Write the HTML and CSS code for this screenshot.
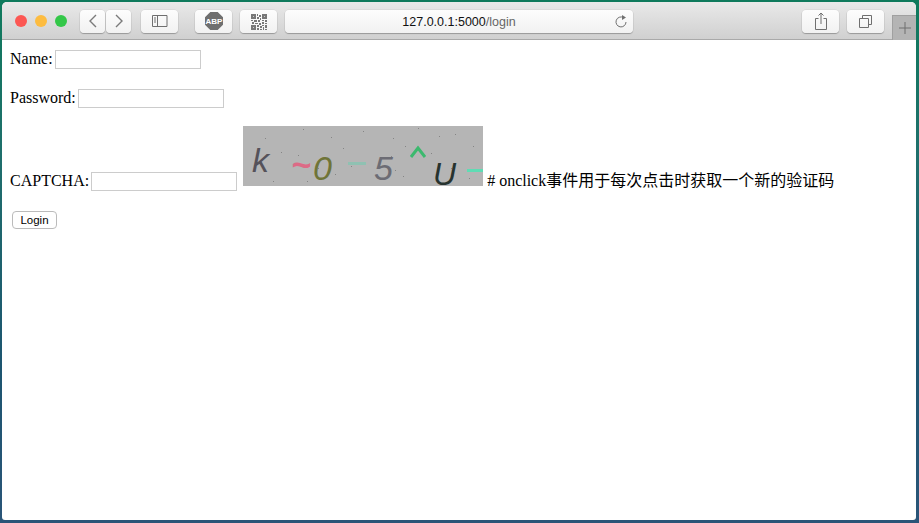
FILE: index.html
```html
<!DOCTYPE html>
<html lang="en">
<head>
  <meta charset="UTF-8" />
  <meta name="viewport" content="width=device-width, initial-scale=1" />
  <title>Login</title>
  <link rel="stylesheet" href="styles.css">
</head>
<body>
  <div class="window">
    <div class="toolbar">
      <div class="lights">
        <span class="light red"></span>
        <span class="light yellow"></span>
        <span class="light green"></span>
      </div>
      <div class="nav">
        <div class="tool tool-nav">
          <svg width="10" height="14" viewBox="0 0 10 14"><path d="M8 1 L2 7 L8 13" class="line"/></svg>
        </div>
        <div class="tool tool-nav">
          <svg width="10" height="14" viewBox="0 0 10 14"><path d="M2 1 L8 7 L2 13" class="line"/></svg>
        </div>
      </div>
      <div class="tool tool-side">
        <svg width="16" height="12" viewBox="0 0 16 12"><path d="M.5.5h14.5v11H.5zM5.5.5v11M2 3h2M2 5h2M2 7h2" class="thin"/></svg>
      </div>
      <div class="tool tool-abp">
        <svg width="18" height="18" viewBox="0 0 18 18">
          <path d="M5.3 0h7.4L18 5.3v7.4L12.700 18H5.300L0 12.700V5.300z" fill="#6f6f6f"/>
          <text x="9" y="12" class="abp-text" text-anchor="middle">ABP</text>
        </svg>
      </div>
      <div class="tool tool-qr">
        <svg width="16" height="17" viewBox="0 0 16 16" fill="#777" shape-rendering="crispEdges">
          <path d="M0 0h5v5H0zM11 0h5v5h-5zM0 11h5v5H0z"/>
          <path d="M6 0h1v2H6zM8 1h2v2H8zM6 3h2v2H6zM9 4h1v2H9zM0 6h2v1H0zM3 6h3v2H3zM7 6h2v2H7zM11 6h2v1h-2zM14 6h2v2h-2zM1 8h2v2H1zM4 9h3v1H4zM8 9h2v2H8zM11 8h2v2h-2zM14 9h2v1h-2zM6 11h2v2H6zM11 11h2v1h-2zM14 11h2v3h-2zM9 12h2v2H9zM6 14h2v2H6zM12 13h1v3h-1zM9 15h2v1H9zM14 15h2v1h-2z"/>
          <path d="M2 2h1v1H2zM13 2h1v1h-1zM2 13h1v1H2z" fill="#ccc"/>
        </svg>
      </div>
      <div class="tool url-bar">
        <span class="url"><span class="host">127.0.0.1:5000</span>/login</span>
        <svg class="reload" width="12" height="13" viewBox="0 0 12 13"><path d="M8.500 2.600A5 5 0 1 0 11 7" class="thin"/><path d="M7 0l4 2.500-4 2.500z" fill="#6f6f6f"/></svg>
      </div>
      <div class="spacer"></div>
      <div class="tool tool-share">
        <svg width="12" height="18" viewBox="0 0 12 18"><path d="M3.500 6.500H.5v11h11v-11H8.500M6 12V1M3.500 3.500L6 1l2.500 2.500" class="thin"/></svg>
      </div>
      <div class="tool tool-tabs">
        <svg width="13" height="13" viewBox="0 0 13 13"><path d="M.5 3.500h9v9h-9zM3.500 3.500v-3h9v9h-3" class="thin"/></svg>
      </div>
      <div class="new-tab">
        <svg width="12" height="12" viewBox="0 0 12 12"><path d="M6 0v12M0 6h12" class="thin"/></svg>
      </div>
    </div>

    <div class="page">
      <form>
        <p class="row">Name:<input type="text" class="field" /></p>
        <p class="row row-short">Password:<input type="password" class="field" /></p>
        <p class="row">CAPTCHA:<input type="text" class="field" />
          <svg class="captcha" width="240" height="60" viewBox="0 0 240 60">
            <rect width="240" height="60" fill="#b5b5b5"/>
            <g fill="#858585">
              <rect x="22" y="12" width="1" height="1"/><rect x="60" y="3" width="1" height="1"/>
              <rect x="88" y="11" width="1" height="1"/><rect x="108" y="40" width="1" height="1"/>
              <rect x="150" y="12" width="1" height="1"/><rect x="162" y="20" width="1" height="1"/>
              <rect x="175" y="2" width="1" height="1"/><rect x="196" y="10" width="1" height="1"/>
              <rect x="208" y="42" width="1" height="1"/><rect x="226" y="52" width="1" height="1"/>
              <rect x="55" y="29" width="1" height="1"/><rect x="75" y="42" width="1" height="1"/>
              <rect x="120" y="5" width="1" height="1"/><rect x="160" y="50" width="1" height="1"/>
              <rect x="38" y="26" width="1" height="1"/><rect x="92" y="48" width="1" height="1"/>
              <rect x="100" y="22" width="1" height="1"/><rect x="148" y="30" width="1" height="1"/>
              <rect x="152" y="44" width="1" height="1"/><rect x="188" y="27" width="1" height="1"/>
              <rect x="212" y="8" width="1" height="1"/><rect x="230" y="20" width="1" height="1"/>
              <rect x="30" y="55" width="1" height="1"/><rect x="64" y="55" width="1" height="1"/>
            </g>
            <text x="9" y="46" class="glyph" fill="#55525a">k</text>
            <text x="48" y="50" class="glyph glyph-bold" fill="#dd6a86">~</text>
            <text x="70" y="54" class="glyph" fill="#6f7438">0</text>
            <rect x="105" y="36" width="18" height="3" fill="#8fc1b2"/>
            <text x="131" y="54" class="glyph" fill="#6c6c74">5</text>
            <path d="M168 31 L175 22 L182 31" class="caret"/>
            <text x="190" y="59" class="glyph glyph-big" fill="#27332f">U</text>
            <rect x="224" y="43" width="16" height="3" fill="#5fdcb4"/>
          </svg>
          # onclick事件用于每次点击时获取一个新的验证码
        </p>
        <button type="button" class="login">Login</button>
      </form>
    </div>
  </div>
</body>
</html>
```

FILE: styles.css
```css
html, body { margin: 0; height: 100%; }
body {
  background: linear-gradient(#0f7a5c 0, #1f6f6c 30%, #1d5570 70%, #2a5578 100%);
  padding: 2px 3px 3px 2px;
  box-sizing: border-box;
  overflow: hidden;
}
.window {
  height: 100%;
  background: #fff;
  border-radius: 5px 5px 3px 3px;
  overflow: hidden;
  display: flex;
  flex-direction: column;
}

.toolbar {
  height: 38px;
  box-sizing: border-box;
  flex: none;
  display: flex;
  align-items: center;
  padding: 1px 0 0 13px;
  background: linear-gradient(#e9e9e9, #d0d0d0);
  border-bottom: 1px solid #a9a9a9;
}
.lights { display: flex; gap: 8px; margin-right: 13px; }
.light { width: 12px; height: 12px; border-radius: 50%; }
.red { background: #fc5753; }
.yellow { background: #fdbc40; }
.green { background: #33c748; }

.nav { display: flex; gap: 1px; margin-right: 10px; }
.tool {
  height: 23px;
  box-sizing: border-box;
  background: linear-gradient(#fdfdfd, #f1f1f1);
  border-radius: 4px;
  box-shadow: 0 1px 1px rgba(0,0,0,0.25), 0 0 0 0.5px rgba(0,0,0,0.08);
  display: flex;
  align-items: center;
  justify-content: center;
}
.tool-nav { width: 25px; }
.tool-side { width: 37px; margin-right: 17px; }
.tool-abp { width: 37px; margin-right: 8px; }
.tool-qr { width: 37px; margin-right: 8px; }
.url-bar { width: 348px; position: relative; padding-top: 1px; }
.spacer { flex: 1; }
.tool-share { width: 37px; margin-right: 8px; }
.tool-tabs { width: 37px; margin-right: 8px; }
.new-tab {
  width: 24px;
  height: 25px;
  box-sizing: border-box;
  align-self: flex-end;
  margin-bottom: -1px;
  background: #b4b4b4;
  border-left: 1px solid #a0a0a0;
  border-top: 1px solid #a0a0a0;
  display: flex;
  align-items: center;
  justify-content: center;
}

.line { fill: none; stroke: #7a7a7a; stroke-width: 1.4; }
.thin { fill: none; stroke: #6f6f6f; stroke-width: 1; }
.abp-text { font: bold 8px "Liberation Sans", sans-serif; fill: #fff; }
.url { font: 12.5px "Liberation Sans", sans-serif; color: #666; }
.host { color: #111; }
.reload { position: absolute; right: 6px; top: 5px; }

.page {
  flex: 1;
  padding: 10px 8px 8px;
  font: 16px "Liberation Serif", "Noto Sans CJK SC", serif;
  color: #000;
}
.row { margin: 0 0 20px; }
.row-short { margin-bottom: 18px; }
.field {
  width: 146px;
  height: 19px;
  box-sizing: border-box;
  border: 1px solid #ccc;
  padding: 0;
  margin: 0 0 0 2px;
  vertical-align: baseline;
}
.captcha { vertical-align: baseline; margin: 0 0 0 2px; }
.glyph { font: italic 34px "Liberation Sans", sans-serif; }
.glyph-bold { font-weight: bold; }
.glyph-big { font-size: 32px; }
.caret { fill: none; stroke: #3cb96e; stroke-width: 3; }
.login {
  display: block;
  width: 45px;
  height: 18px;
  margin: 0 0 0 2px;
  padding: 0;
  font: 11.5px "Liberation Sans", sans-serif;
  background: #fff;
  border: 1px solid #bbb;
  border-radius: 4px;
}
```
